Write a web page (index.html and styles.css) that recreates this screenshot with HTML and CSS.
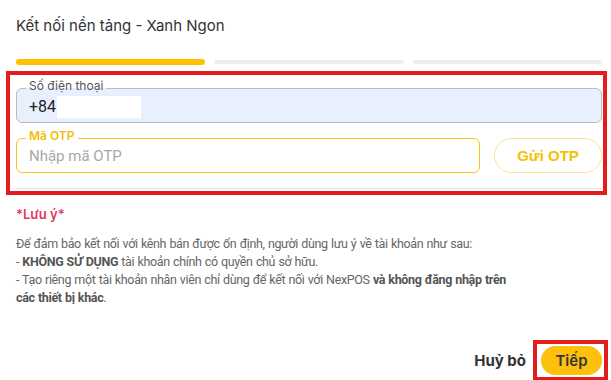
FILE: index.html
```html
<!DOCTYPE html>
<html lang="vi">
<head>
    <meta charset="UTF-8">
    <meta name="viewport" content="width=device-width, initial-scale=1.0">
    <title>Kết nối nền tảng - Xanh Ngon</title>
    <link rel="stylesheet" href="styles.css">
</head>
<body>
    <div class="dialog">
        <h1 class="title">Kết nối nền tảng - Xanh Ngon</h1>

        <div class="steps">
            <span class="step active"></span>
            <span class="step"></span>
            <span class="step"></span>
        </div>

        <div class="mark form-mark">
            <div class="field phone">
                <label>Số điện thoại</label>
                <div class="value">+84<span class="hidden-number"></span></div>
            </div>

            <div class="otp-row">
                <div class="field otp">
                    <label>Mã OTP</label>
                    <div class="placeholder">Nhập mã OTP</div>
                </div>
                <button class="btn-outline" type="button">Gửi OTP</button>
            </div>

            <div class="divider"></div>
        </div>

        <div class="note-title">*Lưu ý*</div>
        <p class="note">
            Để đảm bảo kết nối với kênh bán được ổn định, người dùng lưu ý về tài khoản như sau:<br>
            - <b>KHÔNG SỬ DỤNG</b> tài khoản chính có quyền chủ sở hữu.<br>
            - Tạo riêng một tài khoản nhân viên chỉ dùng để kết nối với NexPOS <b>và không đăng nhập trên</b><br>
            <b>các thiết bị khác</b>.
        </p>

        <div class="footer">
            <button class="btn-text" type="button">Huỷ bỏ</button>
            <div class="mark next-mark">
                <button class="btn-primary" type="button">Tiếp</button>
            </div>
        </div>
    </div>
</body>
</html>
```

FILE: styles.css
```css
body {
    margin: 0;
    background: white;
    font-family: Inter, "Noto Sans", sans-serif;
    color: #333;
}
.dialog {
    width: 586px;
    padding: 16px 9px 0 16px;
}
.title {
    margin: 0;
    font-size: 15px;
    font-weight: 400;
    line-height: 20px;
    color: #333;
}
.steps {
    display: flex;
    align-items: center;
    gap: 9px;
    height: 6px;
    margin-top: 23px;
}
.step {
    flex: 1;
    height: 4px;
    border-radius: 2px;
    background: #eeeeee;
}
.step.active {
    height: 6px;
    border-radius: 3px;
    background: #fdc100;
}
.mark {
    border: 4px solid #e31c1c;
}
.form-mark {
    margin: 6px -5px 0 -10px;
    padding: 13px 1px 0 6px;
    height: 103px;
}
.field {
    position: relative;
    box-sizing: border-box;
    height: 35px;
    padding: 0 12px;
    border-radius: 6px;
    display: flex;
    align-items: center;
}
.field label {
    position: absolute;
    top: -10px;
    left: 9px;
    padding: 0 3px;
    font-size: 12px;
    line-height: 14px;
    background: white;
}
.phone {
    border: 1px solid #b9bcc4;
    background: #e8f0fe;
}
.phone label {
    color: #555;
    background: linear-gradient(white 65%, #e8f0fe 65%);
}
.value {
    display: flex;
    align-items: center;
    margin-top: 2px;
    font-family: Roboto, sans-serif;
    font-size: 16px;
    color: #222;
}
.hidden-number {
    display: inline-block;
    width: 84px;
    height: 22px;
    margin-left: 1px;
    background: white;
}
.otp-row {
    display: flex;
    gap: 14px;
    margin-top: 15px;
}
.otp {
    flex: 1;
    border: 1px solid #fcc21b;
}
.otp label {
    color: #f5bd00;
    font-weight: 600;
}
.placeholder {
    font-family: Roboto, sans-serif;
    font-size: 15px;
    color: #a8a8a8;
}
.btn-outline {
    width: 108px;
    height: 35px;
    border: 1px solid #fde48c;
    border-radius: 18px;
    background: white;
    color: #f7c000;
    font-family: "Liberation Sans", Arial, sans-serif;
    font-size: 15px;
    font-weight: 700;
}
.divider {
    height: 1px;
    margin-top: 15px;
    background: #e6e6e6;
}
.note-title {
    margin-top: 11px;
    font-size: 13px;
    font-weight: 600;
    line-height: 16px;
    color: #e2395d;
}
.note {
    margin: 13px 0 0;
    font-family: Roboto, sans-serif;
    font-size: 12.5px;
    line-height: 18px;
    letter-spacing: -0.35px;
    word-spacing: 0.5px;
    color: #666;
}
.note b {
    color: #555;
    font-weight: 700;
}
.footer {
    display: flex;
    justify-content: flex-end;
    align-items: center;
    gap: 7px;
    margin: 33px -6px 0 0;
}
.btn-text {
    border: none;
    background: none;
    padding: 0;
    font-family: Inter, sans-serif;
    font-size: 15px;
    font-weight: 700;
    color: #333;
}
.next-mark {
    padding: 2px 2px 2px 4px;
}
.btn-primary {
    display: block;
    width: 61px;
    height: 29px;
    border: none;
    border-radius: 15px;
    background: #fdc00d;
    font-family: Inter, sans-serif;
    font-size: 15px;
    font-weight: 600;
    color: #333;
}
```
